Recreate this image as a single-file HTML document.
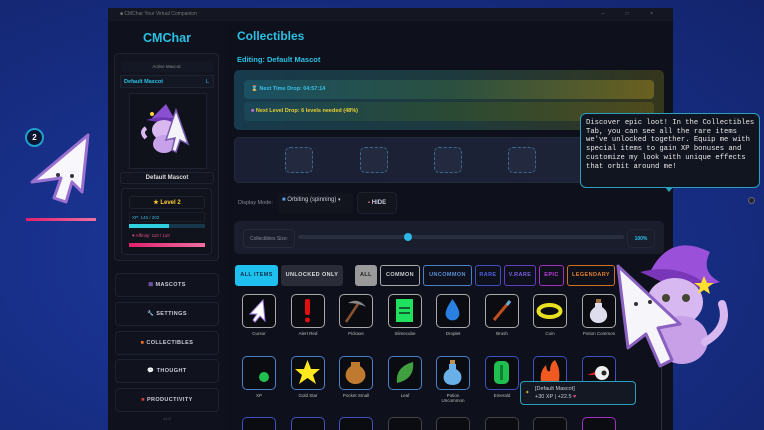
<!DOCTYPE html>
<html style="width:764px;height:430px;overflow:hidden"><head><meta charset="utf-8"><style>
*{margin:0;padding:0;box-sizing:border-box}
body{width:764px;height:430px;overflow:hidden;position:relative;font-family:"Liberation Sans",sans-serif;background:radial-gradient(ellipse at 40% 60%,#1f3aa0 0%,#18308a 45%,#13246c 100%);}
.a{position:absolute}
.clip{position:absolute;left:0;top:0;width:764px;height:430px;overflow:hidden}
.win{left:108px;top:8px;width:565px;height:422px;background:#0e111c}
.tb{left:108px;top:8px;width:565px;height:13px;background:#141722;color:#777;font-size:5px;line-height:13px;padding-left:12px}
.side{left:108px;top:21px;width:118px;height:409px;background:#0f121d}
.pn{border:1px solid #1f2433;border-radius:4px;background:#12151f}
.c{color:#2bc0e4;font-weight:bold}
.w{color:#ddd;font-weight:bold;font-size:6px;text-align:center}
.nav{left:115px;width:104px;height:24px;border:1px solid #1d2230;border-radius:4px;background:#10131d;color:#ccd;font-size:5.5px;font-weight:bold;letter-spacing:.4px;text-align:center;line-height:23px}
.it{width:34px;height:34px;border:1.5px solid #aaa;border-radius:5px;background:#0a0c12}
.lb{font-size:4.5px;color:#bbb;text-align:center;width:50px}
.fb{top:265px;height:21px;border:1.5px solid;border-radius:3px;font-size:5.5px;font-weight:bold;text-align:center;line-height:18px;letter-spacing:.4px}
.slot{top:147px;width:28px;height:26px;border:1px dashed #3a6a88;border-radius:5px;background:#232a40}
</style></head><body><div class="clip">
<div class="a win"></div>
<div class="a tb">■ CMChar Your Virtual Companion<span style="position:absolute;right:10px;letter-spacing:10px">– □ ×</span></div>
<div class="a side"></div>
<div class="a c" style="left:108px;top:31px;width:118px;text-align:center;font-size:12.5px">CMChar</div>
<div class="a pn" style="left:114px;top:53px;width:105px;height:208px"></div>
<div class="a" style="left:121px;top:61px;width:92px;height:11px;background:#141824;border-radius:3px;font-size:4.5px;color:#888;text-align:center;line-height:11px">Active Mascot:</div>
<div class="a" style="left:120px;top:75px;width:94px;height:13px;background:#141824;border:1px solid #1e2332;font-size:5.5px;line-height:12px;padding-left:3px" ><span class="c">Default Mascot</span><span style="position:absolute;right:4px;color:#2bc0e4">L</span></div>
<div class="a" style="left:129px;top:93px;width:78px;height:76px;border:1px solid #1e2332;background:#0f121b"></div>
<svg class="a" style="left:140px;top:98px" width="56" height="58" viewBox="0 0 56 58">
<path d="M10 22 L26 6 L34 20 Z" fill="#8a4fd0"/><path d="M6 22 Q26 16 40 24 L30 26 Z" fill="#6b36b0"/>
<ellipse cx="24" cy="32" rx="12" ry="10" fill="#d9b8f0"/><ellipse cx="24" cy="46" rx="11" ry="9" fill="#c7a2ea"/>
<path d="M6 40 Q0 34 6 30" stroke="#d9b8f0" stroke-width="4" fill="none"/>
<path d="M36 12 L48 46 L40 42 L36 54 L32 52 L35 40 L26 42 Z" fill="#f4f4f8" stroke="#7a5ab0" stroke-width="1.5"/>
<circle cx="12" cy="16" r="2" fill="#ffd23a"/></svg>
<div class="a w" style="left:120px;top:172px;width:94px;height:12px;border:1px solid #1e2332;border-radius:3px;line-height:11px">Default Mascot</div>
<div class="a pn" style="left:121px;top:188px;width:91px;height:67px;background:#10131c"></div>
<div class="a" style="left:129px;top:196px;width:76px;height:13px;border:1px solid #1e2332;border-radius:3px;text-align:center;font-size:6px;font-weight:bold;color:#ffcc33;line-height:12px">★ Level 2</div>
<div class="a" style="left:129px;top:212px;width:76px;height:10px;border:1px solid #1a1f2c;font-size:4.5px;color:#3ab0d8;line-height:9px;padding-left:2px">XP: 145 / 202</div>
<div class="a" style="left:129px;top:224px;width:76px;height:4px;background:#16384a"><div style="width:52%;height:4px;background:#2fd0e0"></div></div>
<div class="a" style="left:129px;top:231px;width:76px;height:10px;font-size:4.5px;color:#e05080;line-height:10px;padding-left:3px">♥ Affinity: 110 / 110</div>
<div class="a" style="left:129px;top:243px;width:76px;height:4px;background:linear-gradient(90deg,#e0206a,#f070a0)"></div>
<div class="a nav" style="top:273px"><span style="color:#8866cc">𝌆</span> MASCOTS</div>
<div class="a nav" style="top:302px">🔧 SETTINGS</div>
<div class="a nav" style="top:331px"><span style="color:#f07020">■</span> COLLECTIBLES</div>
<div class="a nav" style="top:359px">💬 THOUGHT</div>
<div class="a nav" style="top:388px"><span style="color:#d04040">■</span> PRODUCTIVITY</div>
<div class="a" style="left:108px;top:416px;width:118px;text-align:center;font-size:4px;color:#555">v1.0</div>

<div class="a c" style="left:237px;top:29px;font-size:12px">Collectibles</div>
<div class="a c" style="left:237px;top:55px;font-size:7.5px">Editing: Default Mascot</div>
<div class="a" style="left:234px;top:70px;width:430px;height:60px;border-radius:5px;background:linear-gradient(90deg,#173a4c,#1d3a3e 50%,#35361c)"></div>
<div class="a" style="left:244px;top:80px;width:410px;height:19px;border-radius:4px;background:linear-gradient(90deg,#1b5062,#2a5040 50%,#6a6020);font-size:5.5px;font-weight:bold;color:#3ac0e8;line-height:19px;padding-left:7px"><span style="color:#e06090">⌛</span> Next Time Drop: 04:57:14</div>
<div class="a" style="left:244px;top:102px;width:410px;height:19px;border-radius:4px;background:linear-gradient(90deg,#1a4658,#2a4a34 50%,#4e4a1c);font-size:5.5px;font-weight:bold;color:#e8d030;line-height:19px;padding-left:7px"><span style="color:#c070d0">■</span> Next Level Drop: 6 levels needed (48%)</div>
<div class="a" style="left:234px;top:137px;width:430px;height:46px;border-radius:5px;background:linear-gradient(90deg,#1a1f33,#1e2438);border:1px solid #232a3e"></div>
<div class="a slot" style="left:285px"></div><div class="a slot" style="left:360px"></div><div class="a slot" style="left:434px"></div><div class="a slot" style="left:508px"></div>
<div class="a" style="left:238px;top:200px;font-size:5.5px;color:#889">Display Mode:</div>
<div class="a" style="left:278px;top:193px;width:75px;height:20px;background:#12151e;border-radius:3px;font-size:6px;color:#ccd;line-height:15px;padding-left:4px"><span style="color:#5aa0f0">■</span> Orbiting (spinning) <span style="font-size:5px">▾</span></div>
<div class="a" style="left:357px;top:192px;width:40px;height:22px;background:#12151e;border:1px solid #1c2130;border-radius:4px;font-size:6px;color:#ccd;font-weight:bold;line-height:21px;text-align:center"><span style="color:#e07090">▪</span> HIDE</div>
<div class="a" style="left:234px;top:221px;width:430px;height:33px;border-radius:5px;background:#191d2c"></div>
<div class="a" style="left:243px;top:229px;width:52px;height:19px;border:1px solid #262b3a;border-radius:4px;font-size:5px;color:#889;text-align:center;line-height:18px">Collectibles Size:</div>
<div class="a" style="left:298px;top:235px;width:326px;height:4px;border-radius:2px;background:#2a2f40"></div>
<div class="a" style="left:404px;top:233px;width:8px;height:8px;border-radius:50%;background:#2bb8e8"></div>
<div class="a" style="left:627px;top:229px;width:28px;height:19px;border:1px solid #222738;border-radius:4px;font-size:5px;color:#2bc0e4;font-weight:bold;text-align:center;line-height:18px">100%</div>

<div class="a fb" style="left:235px;width:43px;background:#1ec0f0;border-color:#1ec0f0;color:#06304a">ALL ITEMS</div>
<div class="a fb" style="left:281px;width:62px;background:#2a2d38;border-color:#2a2d38;color:#ddd">UNLOCKED ONLY</div>
<div class="a fb" style="left:355px;width:22px;background:#9a9a9a;border-color:#9a9a9a;color:#222">ALL</div>
<div class="a fb" style="left:380px;width:40px;border-color:#aaa;color:#ccc">COMMON</div>
<div class="a fb" style="left:423px;width:49px;border-color:#4a80c8;color:#5a90d8">UNCOMMON</div>
<div class="a fb" style="left:475px;width:26px;border-color:#4050c0;color:#5060e0">RARE</div>
<div class="a fb" style="left:504px;width:32px;border-color:#6040c0;color:#7a60e0">V.RARE</div>
<div class="a fb" style="left:539px;width:25px;border-color:#a030c0;color:#c040e0">EPIC</div>
<div class="a fb" style="left:567px;width:48px;border-color:#d07020;color:#e08030">LEGENDARY</div>

<div class="a it" style="left:242px;top:294px"><svg width="31" height="31" viewBox="0 0 31 31"><path d="M20 5 L22 26 L17 21 L12 27 L10 25 L14 19 L7 19 Z" fill="#fff" stroke="#a080e0"/></svg></div>
<div class="a it" style="left:291px;top:294px"><svg width="31" height="31"><rect x="13" y="4" width="5" height="16" rx="2" fill="#e01010"/><circle cx="15.5" cy="25" r="2.5" fill="#e01010"/></svg></div>
<div class="a it" style="left:339px;top:294px"><svg width="31" height="31"><path d="M8 8 Q18 2 26 12 Q18 8 8 8Z" fill="#888"/><path d="M18 9 L6 27" stroke="#8a5030" stroke-width="2.5"/></svg></div>
<div class="a it" style="left:388px;top:294px"><svg width="31" height="31"><rect x="7" y="4" width="17" height="23" fill="#20e060"/><rect x="10" y="12" width="11" height="2" fill="#106030"/><rect x="10" y="17" width="11" height="2" fill="#106030"/></svg></div>
<div class="a it" style="left:436px;top:294px"><svg width="31" height="31"><path d="M15.5 4 Q24 16 22 21 A7 7 0 0 1 9 21 Q7 16 15.5 4Z" fill="#2a80e0"/></svg></div>
<div class="a it" style="left:485px;top:294px"><svg width="31" height="31"><path d="M24 6 L8 25" stroke="#c05020" stroke-width="3"/><path d="M24 6 L21 10" stroke="#5ab0e0" stroke-width="3"/></svg></div>
<div class="a it" style="left:533px;top:294px"><svg width="31" height="31"><ellipse cx="15.5" cy="16" rx="11" ry="6" fill="none" stroke="#e8e020" stroke-width="4"/></svg></div>
<div class="a it" style="left:582px;top:294px"><svg width="31" height="31"><rect x="13" y="4" width="5" height="4" fill="#a07040"/><path d="M12 8 H19 V12 Q25 16 24 22 Q22 28 15.5 28 Q9 28 7 22 Q6 16 12 12Z" fill="#dde" /></svg></div>
<div class="a lb" style="left:234px;top:331px">Cursor</div><div class="a lb" style="left:283px;top:331px">Alert Red</div><div class="a lb" style="left:331px;top:331px">Pickaxe</div><div class="a lb" style="left:380px;top:331px">Slimecube</div><div class="a lb" style="left:428px;top:331px">Droplet</div><div class="a lb" style="left:477px;top:331px">Brush</div><div class="a lb" style="left:525px;top:331px">Coin</div><div class="a lb" style="left:574px;top:331px">Potion Common</div>
<div class="a it" style="left:242px;top:356px;border-color:#4a80c8"><svg width="31" height="31"><circle cx="21" cy="20" r="5" fill="#20c050"/></svg></div>
<div class="a it" style="left:291px;top:356px;border-color:#4a80c8"><svg width="31" height="31"><path d="M15.5 3 L19 12 L28 12 L21 18 L24 27 L15.5 21 L7 27 L10 18 L3 12 L12 12Z" fill="#ffe820"/></svg></div>
<div class="a it" style="left:339px;top:356px;border-color:#4a80c8"><svg width="31" height="31"><path d="M11 5 H20 V9 Q27 14 25 21 Q22 27 15.5 27 Q9 27 6 21 Q4 14 11 9Z" fill="#c07a30"/></svg></div>
<div class="a it" style="left:388px;top:356px;border-color:#4a80c8"><svg width="31" height="31"><path d="M8 26 Q6 10 24 5 Q26 22 8 26Z" fill="#40a040"/></svg></div>
<div class="a it" style="left:436px;top:356px;border-color:#4a80c8"><svg width="31" height="31"><rect x="13" y="3" width="5" height="4" fill="#c09050"/><path d="M12 7 H19 V12 Q26 16 24 23 Q22 28 15.5 28 Q9 28 7 23 Q5 16 12 12Z" fill="#6ab0e8"/></svg></div>
<div class="a it" style="left:485px;top:356px;border-color:#4050c0"><svg width="31" height="31"><rect x="8" y="4" width="15" height="23" rx="5" fill="#20c050"/><rect x="14" y="8" width="3" height="15" fill="#108030"/></svg></div>
<div class="a it" style="left:533px;top:356px;border-color:#4050c0"><svg width="31" height="31"><path d="M8 28 Q4 16 12 8 Q13 16 16 14 Q16 6 21 3 Q28 14 24 28Z" fill="#f05a20"/></svg></div>
<div class="a it" style="left:582px;top:356px;border-color:#4050c0"><svg width="31" height="31"><circle cx="19" cy="16" r="7" fill="#eee"/><circle cx="21" cy="16" r="2.5" fill="#222"/><path d="M4 18 L12 15 L12 18Z" fill="#e02020"/></svg></div>
<div class="a lb" style="left:234px;top:393px">XP</div><div class="a lb" style="left:283px;top:393px">Gold Star</div><div class="a lb" style="left:331px;top:393px">Pocket Small</div><div class="a lb" style="left:380px;top:393px">Leaf</div><div class="a lb" style="left:428px;top:393px">Potion<br>Uncommon</div><div class="a lb" style="left:477px;top:393px">Emerald</div>
<div class="a it" style="left:242px;top:417px;border-color:#4050c0"></div><div class="a it" style="left:291px;top:417px;border-color:#4050c0"></div><div class="a it" style="left:339px;top:417px;border-color:#4050c0"></div><div class="a it" style="left:388px;top:417px;border-color:#444"></div><div class="a it" style="left:436px;top:417px;border-color:#444"></div><div class="a it" style="left:485px;top:417px;border-color:#444"></div><div class="a it" style="left:533px;top:417px;border-color:#444"></div><div class="a it" style="left:582px;top:417px;border-color:#a030c0"></div>
<div class="a" style="left:661px;top:290px;width:1px;height:140px;background:#2a2f40"></div>

<div class="a" style="left:520px;top:381px;width:116px;height:24px;background:#141822;border:1.5px solid #2aa0c0;border-radius:4px;font-size:5.5px;color:#ccd;line-height:8px;padding:3px 0 0 14px"><span style="position:absolute;left:4px;top:7px;color:#e0b040">✦</span>[Default Mascot]<br>+30 XP | +22.5 <span style="color:#e05080">♥</span></div>

<svg class="a" style="left:610px;top:232px" width="125" height="140" viewBox="0 0 125 140">
<path d="M40 40 Q60 0 100 20 Q90 40 110 50 Q80 60 40 40Z" fill="#9a50d8"/>
<path d="M30 40 Q70 30 100 55 L70 58Z" fill="#7a36b8"/>
<ellipse cx="65" cy="70" rx="28" ry="24" fill="#d8b8f0"/>
<ellipse cx="72" cy="108" rx="26" ry="24" fill="#c8a0e8"/>
<path d="M95 110 Q120 95 112 72" stroke="#d8b8f0" stroke-width="8" fill="none" stroke-linecap="round"/>
<circle cx="56" cy="66" r="4" fill="#443"/><circle cx="76" cy="66" r="4" fill="#443"/>
<path d="M94 44 L97 51 L104 51 L98 55 L100 62 L94 58 L88 62 L90 55 L84 51 L91 51Z" fill="#ffe030"/>
<path d="M8 34 L70 92 L48 96 L62 128 L50 134 L36 102 L18 116Z" fill="#f6f6fa" stroke="#8a60c0" stroke-width="3" stroke-linejoin="round"/>
<circle cx="26" cy="72" r="2" fill="#333"/><circle cx="40" cy="70" r="2" fill="#333"/>
</svg>

<div class="a" style="left:580px;top:113px;width:180px;height:75px;background:#111520;border:1.5px solid #2aa0c0;border-radius:6px;font-family:'Liberation Mono',monospace;font-size:7.2px;color:#e8e8e8;line-height:8.7px;padding:5px 4px 0 5px;white-space:pre">Discover epic loot! In the Collectibles
Tab, you can see all the rare items
we've unlocked together. Equip me with
special items to gain XP bonuses and
customize my look with unique effects
that orbit around me!</div>
<div class="a" style="left:665px;top:187px;width:0;height:0;border-left:4px solid transparent;border-right:4px solid transparent;border-top:5px solid #2aa0c0"></div>
<div class="a" style="left:748px;top:197px;width:7px;height:7px;border-radius:50%;background:#223;border:1px solid #667"></div>

<div class="a" style="left:25px;top:128px;width:19px;height:19px;border-radius:50%;background:#0b1530;border:2px solid #1ea0d0;color:#fff;font-size:8px;font-weight:bold;text-align:center;line-height:15px">2</div>
<svg class="a" style="left:28px;top:132px" width="66" height="85" viewBox="0 0 66 85">
<path d="M60 3 L54 60 L44 50 L38 70 L26 66 L33 46 L4 50 Z" fill="#f8f8fc" stroke="#9a70d0" stroke-width="3" stroke-linejoin="round"/>
<circle cx="30" cy="43" r="2" fill="#334"/><circle cx="44" cy="44" r="2" fill="#334"/>
</svg>
<div class="a" style="left:26px;top:218px;width:70px;height:3px;background:linear-gradient(90deg,#e0206a,#f070a0)"></div>
</div></body></html>
